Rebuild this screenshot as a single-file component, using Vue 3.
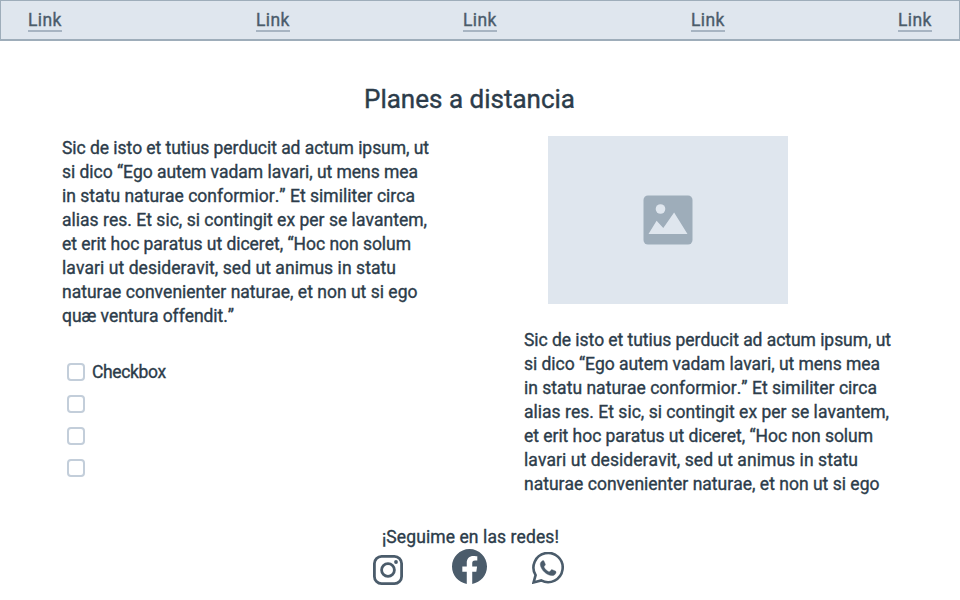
<script setup>
const links = [0, 1, 2, 3, 4]
const lines = [
  { text: 'Sic de isto et tutius perducit ad actum ipsum, ut', width: 367 },
  { text: 'si dico “Ego autem vadam lavari, ut mens mea', width: 356 },
  { text: 'in statu naturae conformior.” Et similiter circa', width: 353 },
  { text: 'alias res. Et sic, si contingit ex per se lavantem,', width: 365 },
  { text: 'et erit hoc paratus ut diceret, “Hoc non solum', width: 349 },
  { text: 'lavari ut desideravit, sed ut animus in statu', width: 334 },
  { text: 'naturae convenienter naturae, et non ut si ego', width: 355.5 },
  { text: 'quæ ventura offendit.”', width: 172 },
]
const shortLines = lines.slice(0, 7)
const checks = ['Checkbox', '', '', '']

// Tracks a line of text so that it fills the given width.
const vFit = {
  mounted(el, { value }) {
    const natural = el.getBoundingClientRect().width
    el.style.letterSpacing = `${(value - natural) / (el.textContent.length - 0.5)}px`
  },
}
</script>

<template>
  <div class="page">
    <nav class="nav">
      <a v-for="n in links" :key="n" class="link"><span v-fit="33.5">Link</span></a>
    </nav>

    <h1 class="title"><span v-fit="211">Planes a distancia</span></h1>

    <main class="columns">
      <section class="left">
        <p class="text">
          <span v-for="l in lines" :key="l.text" class="line"><span v-fit="l.width">{{ l.text }}</span></span>
        </p>
        <ul class="checks">
          <li v-for="(c, i) in checks" :key="i" class="check">
            <span class="box"></span>
            <span v-if="c" v-fit="74">{{ c }}</span>
          </li>
        </ul>
      </section>

      <section class="right">
        <div class="image">
          <svg width="50" height="50" viewBox="0 0 50 50">
            <rect x="0.5" y="0.5" width="49" height="49" rx="4.5" fill="#9eadba" />
            <circle cx="17.5" cy="14" r="4.8" fill="#dfe6ee" />
            <path d="M5.5 39L13.6 25.8L20.3 33L31.1 17.5L44.5 39Z" fill="#dfe6ee" />
          </svg>
        </div>
        <p class="text">
          <span v-for="l in shortLines" :key="l.text" class="line"><span v-fit="l.width">{{ l.text }}</span></span>
        </p>
      </section>
    </main>

    <footer class="footer">
      <p class="follow"><span v-fit="177">¡Seguime en las redes!</span></p>
      <div class="socials">
        <svg class="instagram" width="30" height="30" viewBox="0 0 30 30" fill="none" stroke="#4b5c6b">
          <rect x="1.4" y="1.4" width="27.2" height="27.2" rx="7.2" stroke-width="2.8" />
          <circle cx="15" cy="15" r="6.4" stroke-width="2.8" />
          <circle cx="23" cy="7" r="1.9" fill="#4b5c6b" stroke="none" />
        </svg>
        <svg class="facebook" width="35" height="35" viewBox="0 0 24 24" fill="#4b5c6b">
          <path d="M24 12.073c0-6.627-5.373-12-12-12s-12 5.373-12 12c0 5.99 4.388 10.954 10.125 11.854v-8.385H7.078v-3.47h3.047V9.43c0-3.007 1.792-4.669 4.533-4.669 1.312 0 2.686.235 2.686.235v2.953H15.83c-1.491 0-1.956.925-1.956 1.874v2.25h3.328l-.532 3.47h-2.796v8.385C19.612 23.027 24 18.062 24 12.073z" />
        </svg>
        <svg class="whatsapp" width="32" height="32" viewBox="0 0 32 32">
          <path d="M1.6 30.4L3.6 23.1A14.6 14.6 0 1 1 9.2 28.4Z" fill="none" stroke="#4b5c6b" stroke-width="2.6" />
          <path d="M10.6 8.7C9.2 9.3 8.1 11 8.3 12.8C9 18 14.7 23.4 20 23.6C22 23.6 23.8 22.2 24 20.4C24.1 19.7 23.9 19.4 23.3 19.1L20.2 17.7C19.7 17.5 19.4 17.7 19 18.2L17.8 19.6C17.5 19.9 17.1 19.9 16.7 19.7C14.7 18.8 13 17.1 12.1 15.3C11.9 14.9 12 14.6 12.3 14.2L13.2 13.1C13.4 12.8 13.4 12.5 13.3 12.2L12 9.2C11.7 8.5 11.2 8.4 10.6 8.7Z" fill="#4b5c6b" stroke="#4b5c6b" stroke-width="0.4" />
        </svg>
      </div>
    </footer>
  </div>
</template>

<style>
body { background: #fff; }
</style>

<style scoped>
.page {
  box-sizing: border-box;
  width: 960px;
  height: 600px;
  overflow: hidden;
  background: #fff;
  color: #2c3c4a;
  font: 400 17.5px/24px Roboto, sans-serif;
  font-kerning: none;
  font-variant-ligatures: none;
  -webkit-text-stroke: 0.35px;
}
p, h1, ul { margin: 0; padding: 0; }
.nav {
  box-sizing: border-box;
  display: grid;
  grid-template-columns: 228px 207px 228px 207px 34px;
  height: 41px;
  padding: 7px 0 0 27px;
  background: #dfe6ee;
  border: 1px solid #9eadba;
  border-bottom-width: 2px;
  color: #4b5c6b;
}
.link {
  box-sizing: border-box;
  width: 34px;
  height: 24px;
  line-height: 25px;
  white-space: nowrap;
  border-bottom: 2px solid #a7b4c2;
}
.title {
  padding: 43px 0 0 364px;
  font-size: 26px;
  font-weight: 400;
  line-height: 31px;
  white-space: nowrap;
  -webkit-text-stroke: 0.4px;
}
.columns {
  display: grid;
  grid-template-columns: 462px 380px;
  height: 381px;
  padding: 21px 0 0 62px;
}
.line { display: block; white-space: nowrap; }
.checks {
  display: flex;
  flex-direction: column;
  gap: 8px;
  padding: 32px 0 0 5px;
  list-style: none;
}
.check { display: flex; align-items: center; gap: 7px; height: 24px; }
.box {
  box-sizing: border-box;
  width: 18px;
  height: 18px;
  border: 2px solid #c3ceda;
  border-radius: 4px;
}
.image {
  display: flex;
  align-items: center;
  justify-content: center;
  width: 240px;
  height: 168px;
  margin: 0 0 24px 24px;
  background: #dfe6ee;
}
.footer { padding: 8px 0 0 373px; }
.follow { padding-left: 9px; white-space: nowrap; }
.socials { display: flex; align-items: flex-start; }
.socials svg { display: block; }
.instagram { margin-top: 6px; }
.facebook { margin: -0.5px 0 0 49.4px; }
.whatsapp { margin: 3px 0 0 44.6px; }
</style>
